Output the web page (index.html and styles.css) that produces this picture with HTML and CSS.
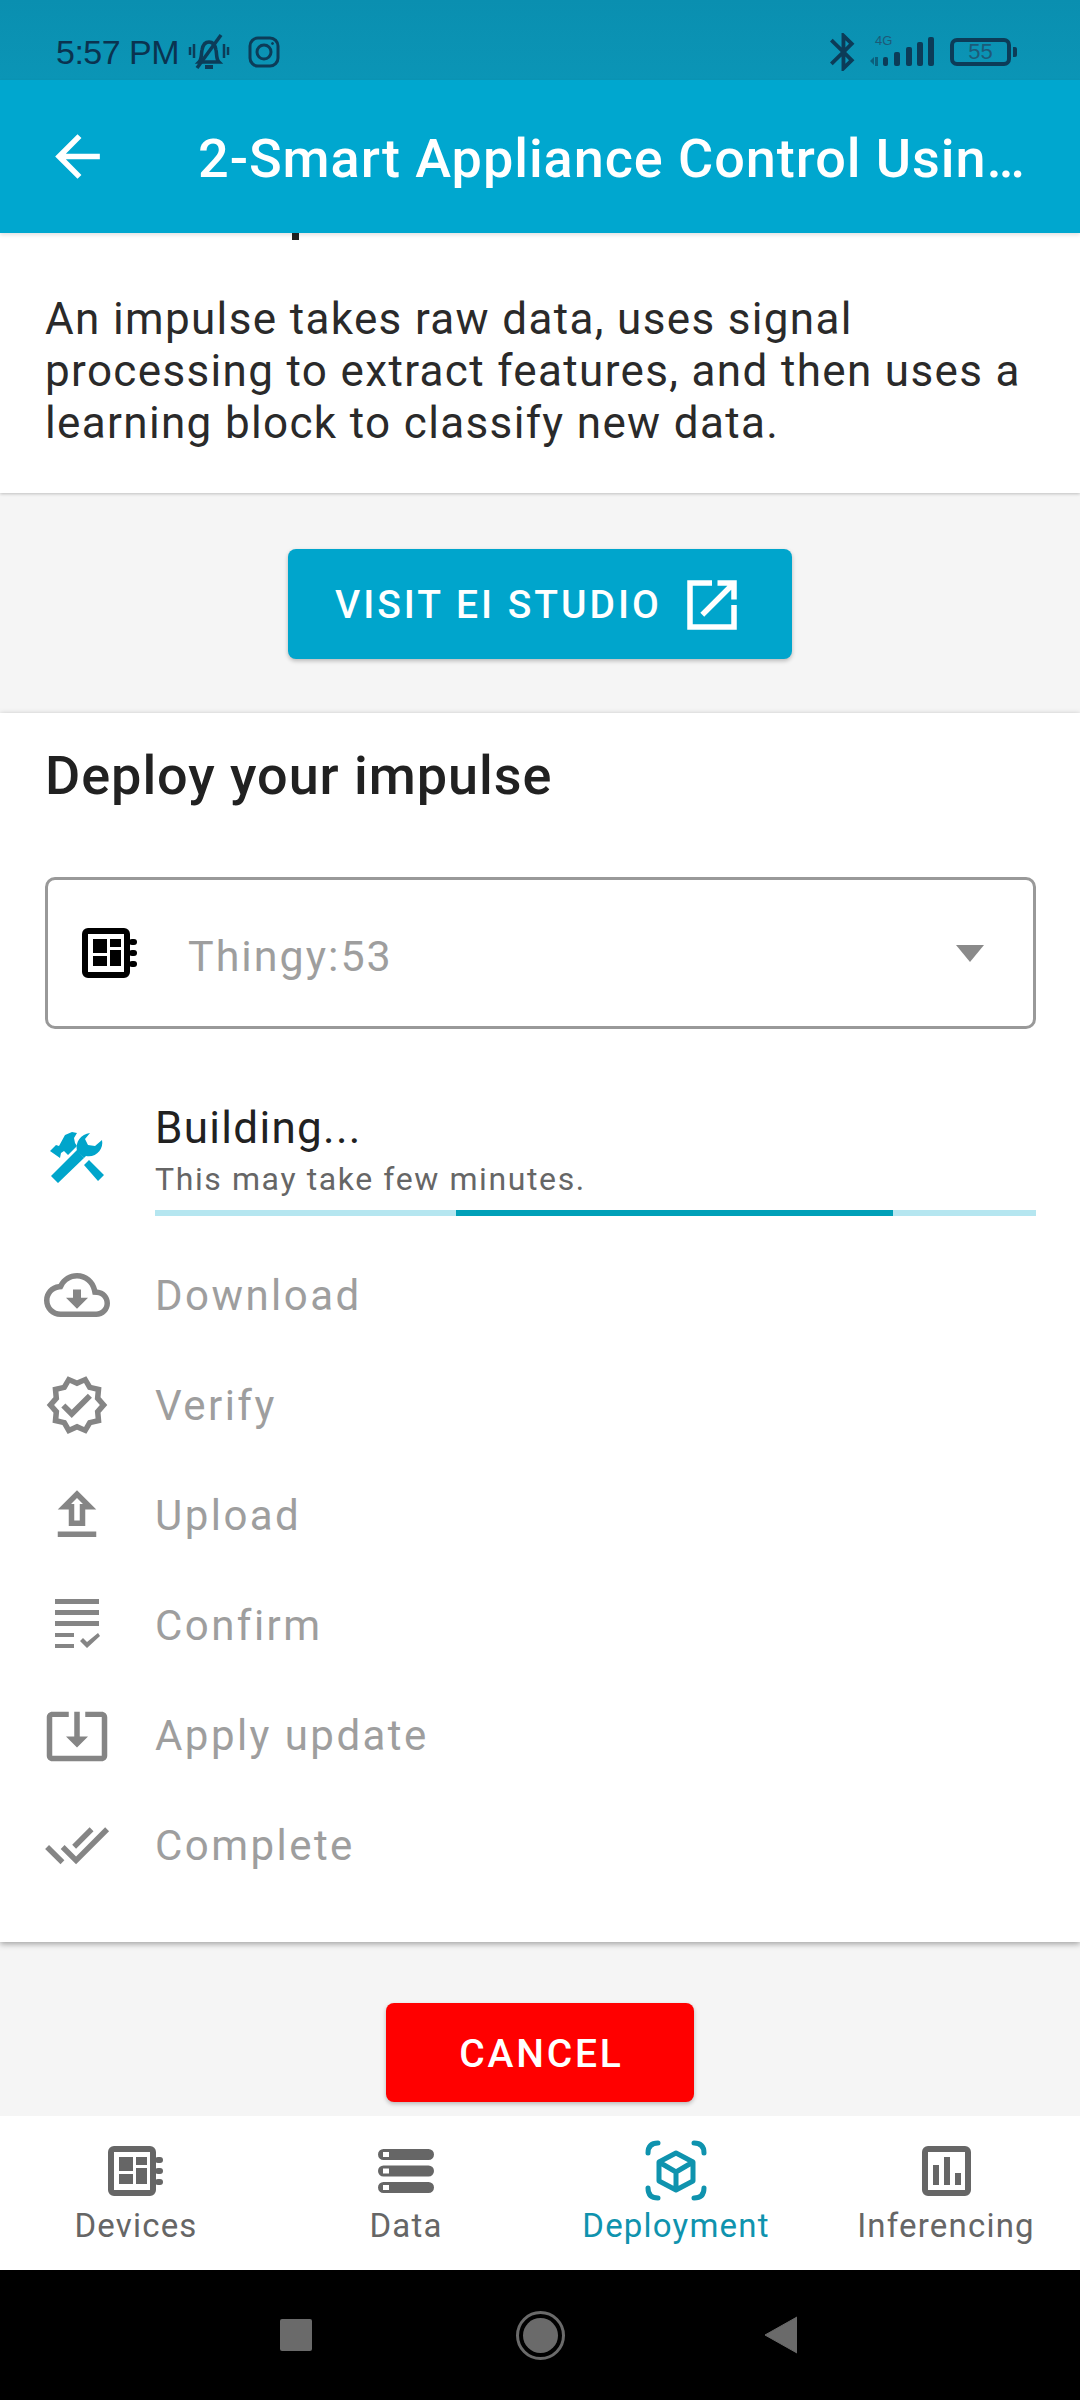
FILE: index.html
```html
<!DOCTYPE html>
<html lang="en">
<head>
  <meta charset="UTF-8" />
  <meta name="viewport" content="width=device-width, initial-scale=1.0"/>
  <title>Deployment</title>
  <link rel="stylesheet" href="styles.css">
</head>
<body>
  <div class="status-bar">
    <span class="status-time">5:57 PM</span>
    <svg class="icon-bell" viewBox="0 0 44 40" fill="none" stroke="#0c3c58" stroke-width="3.5">
      <path d="M12 30c3-3 2-7 3-12 1-6 4-8 7-8s6 2 7 8c1 5 0 9 3 12z"/>
      <path d="M18 35h8" stroke-width="4"/>
      <path d="M34 3 10 36"/>
      <path d="M3 15v8M7 12v14M37 12v14M41 15v8" stroke-width="2.5"/>
    </svg>
    <svg class="icon-insta" viewBox="0 0 32 32" fill="none" stroke="#0c3c58" stroke-width="3">
      <rect x="2" y="2" width="28" height="28" rx="8"/>
      <circle cx="16" cy="16" r="7"/>
      <circle cx="24.5" cy="7.5" r="1" fill="#0c3c58" stroke-width="1"/>
    </svg>
    <div class="status-right">
      <svg class="icon-bt" viewBox="5 2 13 20" fill="#0c3c58" preserveAspectRatio="none">
        <path d="M17.71 7.71L12 2h-1v7.59L6.41 5 5 6.41 10.59 12 5 17.59 6.41 19 11 14.41V22h1l5.71-5.71-4.3-4.29 4.3-4.29zM13 5.83l1.88 1.88L13 9.59V5.83zm1.88 10.46L13 18.17v-3.76l1.88 1.88z"/>
      </svg>
      <div class="signal">
        <span class="signal-label">4G</span>
        <svg class="signal-bars" viewBox="0 0 65 30" fill="#0c3c58">
          <path d="M0 24l4-4v8zM5 20h3v9H5z" opacity=".6"/>
          <rect x="13" y="20" width="5" height="9" rx="2"/>
          <rect x="24" y="15" width="6" height="14" rx="2"/>
          <rect x="36" y="10" width="6" height="19" rx="2"/>
          <rect x="47" y="5" width="6" height="24" rx="2"/>
          <rect x="58" y="0" width="6" height="29" rx="2"/>
        </svg>
      </div>
      <div class="battery"><span>55</span></div>
      <div class="battery-nub"></div>
    </div>
  </div>

  <div class="app-bar">
    <svg class="icon-back" viewBox="0 0 24 24" fill="#fff">
      <path d="M20 11H7.83l5.59-5.59L12 4l-8 8 8 8 1.41-1.41L7.83 13H20v-2z"/>
    </svg>
    <span class="app-title">2-Smart Appliance Control Usin…</span>
  </div>

  <section class="intro card">
    <div class="cut-stem"></div>
    <p>An impulse takes raw data, uses signal processing to extract features, and then uses a learning block to classify new data.</p>
  </section>

  <div class="action-band visit-band">
    <button class="btn btn-visit">
      <span>VISIT EI STUDIO</span>
      <svg class="icon-open" viewBox="0 0 24 24" fill="#fff">
        <path d="M19 19H5V5h7V3H3v18h18v-9h-2v7zM14 3v2h3.59l-9.83 9.83 1.41 1.41L19 6.41V10h2V3h-7z"/>
      </svg>
    </button>
  </div>

  <section class="deploy card">
    <h2>Deploy your impulse</h2>

    <div class="select-box">
      <svg class="icon-chip" viewBox="0 0 56 50">
        <rect x="3" y="3" width="42" height="44" rx="3" fill="none" stroke="#000" stroke-width="6"/>
        <path d="M11 11h14v14H11zM28 11h11v8H28zM11 28h14v10H11zM28 22h11v16H28z"/>
        <rect x="47" y="11" width="8" height="6" rx="3"/><rect x="47" y="22" width="8" height="6" rx="3"/><rect x="47" y="33" width="8" height="6" rx="3"/>
      </svg>
      <span class="select-value">Thingy:53</span>
      <div class="caret"></div>
    </div>

    <div class="build-row">
      <svg class="icon-tools" viewBox="0 0 54 52" fill="#00a5cb">
        <path d="M1 45 27 19l7 8L8 52zM34 34l5-5 15 15-6 6z"/>
        <path d="M27 20C25 11 31 3 40 2l-5 6 3 6 7 1 7-6c2 9-6 18-16 16l-2 2z"/>
        <path d="M0 20l6-6 3 1 6-11 7-3 5 1-3 5 1 5 2 3-9 9-4-4-3 2-1 5z"/>
      </svg>
      <div class="build-text">
        <div class="build-title">Building...</div>
        <div class="build-sub">This may take few minutes.</div>
        <div class="progress"><div class="progress-fill"></div></div>
      </div>
    </div>

    <ul class="steps">
      <li>
        <svg viewBox="0 0 24 24"><path d="M19.35 10.04C18.67 6.59 15.64 4 12 4 9.11 4 6.6 5.64 5.35 8.04 2.34 8.36 0 10.91 0 14c0 3.31 2.69 6 6 6h13c2.76 0 5-2.24 5-5 0-2.64-2.05-4.78-4.65-4.96zM19 18H6c-2.21 0-4-1.79-4-4 0-2.05 1.53-3.76 3.56-3.97l1.07-.11.5-.95C8.08 7.14 9.94 6 12 6c2.62 0 4.88 1.86 5.39 4.43l.3 1.5 1.53.11c1.56.1 2.78 1.41 2.78 2.96 0 1.65-1.35 3-3 3zm-5.55-8h-2.9v3H8l4 4 4-4h-2.55z"/></svg>
        <span>Download</span>
      </li>
      <li>
        <svg viewBox="0 0 24 24"><path d="M23 11.99l-2.44-2.79.34-3.69-3.61-.82L15.4 1.5 12 2.96 8.6 1.5 6.71 4.69 3.1 5.5l.34 3.7L1 11.99l2.44 2.79-.34 3.7 3.61.82L8.6 22.5l3.4-1.47 3.4 1.46 1.89-3.19 3.61-.82-.34-3.69L23 11.99zm-3.95 1.48l-.56.65.08.85.18 1.95-1.9.43-.84.19-.44.74-.99 1.68-1.78-.77-.79-.33-.79.34-1.78.77-.99-1.67-.44-.74-.84-.19-1.9-.43.18-1.96.08-.85-.56-.65L3.67 12l1.29-1.48.56-.65-.09-.85-.18-1.94 1.9-.43.84-.19.44-.74.99-1.68 1.78.77.79.33.79-.34 1.78-.77.99 1.68.44.74.84.19 1.9.43-.18 1.95-.08.85.56.65 1.29 1.47-1.28 1.48z"/><path d="M10.09 13.75l-2.32-2.33-1.48 1.49 3.8 3.81 7.34-7.36-1.48-1.49z"/></svg>
        <span>Verify</span>
      </li>
      <li>
        <svg viewBox="0 0 24 24"><path d="M9 16h6v-6h4l-7-7-7 7h4v6zm3-10.170L14.170 8H13v6h-2V8H9.830L12 5.830zM5 18h14v2H5z"/></svg>
        <span>Upload</span>
      </li>
      <li>
        <svg viewBox="0 0 66 66"><path d="M11 7h44v5H11zM11 18h44v5H11zM11 29h44v5H11zM11 41h19v4H11zM11 52h19v4H11z"/><path d="M36 49l3-3 4 4 11-9 2 3-13 12z"/></svg>
        <span>Confirm</span>
      </li>
      <li>
        <svg viewBox="0 0 24 24"><path d="M12 16.500l4-4h-3v-9h-2v9H8l4 4zm9-13h-6v1.990h6v14.030H3V5.490h6V3.500H3c-1.100 0-2 .9-2 2v14c0 1.100.9 2 2 2h18c1.100 0 2-.9 2-2v-14c0-1.100-.9-2-2-2z"/></svg>
        <span>Apply update</span>
      </li>
      <li>
        <svg viewBox="0 0 24 24"><path d="M18 7l-1.410-1.410-6.340 6.340 1.410 1.410L18 7zm4.240-1.410L11.660 16.170 7.480 12l-1.410 1.410L11.660 19l12-12-1.420-1.410zM.41 13.410L6 19l1.410-1.410L1.830 12 .41 13.410z"/></svg>
        <span>Complete</span>
      </li>
    </ul>
  </section>

  <div class="action-band cancel-band">
    <button class="btn btn-cancel">CANCEL</button>
  </div>

  <nav class="tabs">
    <div class="tab">
      <svg class="tab-icon icon-devices" viewBox="0 0 56 50" fill="#666">
        <rect x="3" y="3" width="42" height="44" rx="3" fill="none" stroke="#666" stroke-width="6"/>
        <path d="M11 11h14v14H11zM28 11h11v8H28zM11 28h14v10H11zM28 22h11v16H28z"/>
        <rect x="47" y="11" width="8" height="6" rx="3"/><rect x="47" y="22" width="8" height="6" rx="3"/><rect x="47" y="33" width="8" height="6" rx="3"/>
      </svg>
      <span>Devices</span>
    </div>
    <div class="tab">
      <svg class="tab-icon icon-data" viewBox="0 0 56 44" fill="#666">
        <path fill-rule="evenodd" d="M5.500 0h45a5.500 5.500 0 0 1 0 11h-45a5.500 5.500 0 0 1 0-11zM5 3v5h6V3zM5.500 16.500h45a5.500 5.500 0 0 1 0 11h-45a5.500 5.500 0 0 1 0-11zM5 19.500v5h6v-5zM5.500 33h45a5.500 5.500 0 0 1 0 11h-45a5.500 5.500 0 0 1 0-11zM5 36v5h6v-5z"/>
      </svg>
      <span>Data</span>
    </div>
    <div class="tab tab-active">
      <svg class="tab-icon icon-deploy" viewBox="0 0 62 61" fill="none" stroke="#0f93ae" stroke-width="5">
        <path d="M31 13 48 22V41L31 50 14 41V22zM14 22l17 10 17-10M31 32v18" stroke-linejoin="round"/>
        <path d="M3 13Q3 3 13 3M49 3Q59 3 59 13M59 48Q59 58 49 58M13 58Q3 58 3 48" stroke-linecap="round"/>
      </svg>
      <span>Deployment</span>
    </div>
    <div class="tab">
      <svg class="tab-icon icon-inference" viewBox="0 0 49 50" fill="#666">
        <rect x="3" y="3" width="43" height="44" rx="3" fill="none" stroke="#666" stroke-width="6"/>
        <path d="M11 19h6v20h-6zM22 11h6v28h-6zM33 27h6v12h-6z"/>
      </svg>
      <span>Inferencing</span>
    </div>
  </nav>

  <div class="system-nav">
    <div class="sys-square"></div>
    <div class="sys-circle"><div></div></div>
    <svg class="sys-back" viewBox="0 0 33 38" fill="#6a6a6a"><path d="M33 1v36L1 19z" stroke="#6a6a6a" stroke-width="1" stroke-linejoin="round"/></svg>
  </div>
</body>
</html>
```

FILE: styles.css
```css
* {
  box-sizing: border-box;
}

body {
  margin: 0;
  height: 2400px;
  width: 1080px;
  overflow: hidden;
  display: flex;
  flex-direction: column;
  background-color: #f5f5f5;
  font-family: Roboto, "Noto Sans", sans-serif;
  color: #212121;
}

/* status bar */
.status-bar {
  height: 80px;
  flex: none;
  display: flex;
  align-items: center;
  padding: 24px 63px 0 56px;
  background: linear-gradient(#0a8fb0, #0b95b6);
  color: #0a3350;
}

.status-time {
  font-family: "Liberation Sans", sans-serif;
  font-size: 34px;
  letter-spacing: -0.5px;
}

.icon-bell {
  width: 44px;
  height: 40px;
  margin-left: 8px;
}

.icon-insta {
  width: 32px;
  height: 32px;
  margin-left: 17px;
}

.status-right {
  margin-left: auto;
  display: flex;
  align-items: center;
}

.icon-bt {
  width: 25px;
  height: 38px;
}

.signal {
  position: relative;
  width: 65px;
  height: 30px;
  margin-left: 15px;
}

.signal-label {
  position: absolute;
  left: 5px;
  top: -4px;
  font-family: "Liberation Sans", sans-serif;
  font-size: 13px;
  color: #1d5a78;
}

.signal-bars {
  display: block;
  width: 65px;
  height: 30px;
}

.battery {
  width: 61px;
  height: 28px;
  margin-left: 15px;
  border: 4px solid #0c3c58;
  border-radius: 7px;
  display: flex;
  align-items: center;
  justify-content: center;
  font-family: "Liberation Sans", sans-serif;
  font-size: 22px;
  color: #1d5a78;
}

.battery-nub {
  width: 4px;
  height: 10px;
  margin-left: 2px;
  background-color: #0c3c58;
  border-radius: 0 2px 2px 0;
}

/* app bar */
.app-bar {
  height: 153px;
  flex: none;
  display: flex;
  align-items: center;
  background-color: #00a7cf;
  padding-left: 44px;
  position: relative;
  box-shadow: 0 2px 4px rgba(0, 0, 0, 0.12);
  z-index: 2;
}

.icon-back {
  width: 67px;
  height: 67px;
}

.app-title {
  margin-left: 87px;
  margin-top: 3px;
  color: #fff;
  font-size: 54px;
  font-weight: 500;
  white-space: nowrap;
  letter-spacing: 0.95px;
}

/* cards */
.card {
  background-color: #fff;
  flex: none;
  box-shadow: 0 1px 3px rgba(0, 0, 0, 0.22);
}

.intro {
  height: 260px;
}

.cut-stem {
  width: 7px;
  height: 7px;
  margin-left: 292px;
  background-color: #212121;
}

.intro p {
  margin: 53px 0 0;
  padding: 0 45px;
  font-size: 44px;
  line-height: 52px;
  letter-spacing: 1.35px;
  color: #2a2a2a;
}

.action-band {
  flex: none;
  display: flex;
  justify-content: center;
  align-items: flex-start;
}

.visit-band {
  height: 220px;
  padding-top: 56px;
}

.cancel-band {
  height: 174px;
  padding-top: 61px;
}

.btn {
  border: 0;
  border-radius: 8px;
  color: #fff;
  font-family: inherit;
  font-size: 39px;
  font-weight: 500;
  letter-spacing: 3px;
  display: flex;
  align-items: center;
  justify-content: center;
  box-shadow: 0 2px 4px rgba(0, 0, 0, 0.25);
}

.btn-visit {
  width: 504px;
  height: 110px;
  background-color: #00a5cc;
  gap: 17px;
  padding-top: 2px;
}

.icon-open {
  width: 66px;
  height: 66px;
}

.btn-cancel {
  width: 308px;
  height: 99px;
  padding: 3px 0 0 3px;
  letter-spacing: 2.8px;
  background-color: #ff0000;
}

/* deploy section */
.deploy {
  height: 1229px;
  padding: 33px 44px 0 45px;
  box-shadow: 0 2px 6px rgba(0, 0, 0, 0.35);
  position: relative;
}

.deploy h2 {
  margin: 0;
  height: 60px;
  line-height: 60px;
  font-size: 54px;
  font-weight: 500;
  letter-spacing: 0.95px;
}

.select-box {
  margin-top: 71px;
  height: 152px;
  display: flex;
  align-items: center;
  padding: 0 46px 0 34px;
  border: 3px solid #999;
  border-radius: 10px;
}

.icon-chip {
  width: 56px;
  height: 50px;
  flex: none;
}

.select-value {
  margin-left: 50px;
  margin-top: 5px;
  font-size: 43px;
  letter-spacing: 2px;
  color: #9e9e9e;
}

.caret {
  margin-left: auto;
  margin-right: 3px;
  width: 0;
  height: 0;
  border-left: 14px solid transparent;
  border-right: 14px solid transparent;
  border-top: 17px solid #8a8a8a;
}

.build-row {
  margin-top: 47px;
  margin-left: -45px;
  display: flex;
  align-items: center;
  height: 168px;
}

.icon-tools {
  width: 54px;
  height: 52px;
  margin-left: 50px;
  margin-top: -6px;
  flex: none;
}

.build-text {
  margin-left: 51px;
  margin-top: -2px;
  flex: 1;
}

.build-title {
  font-size: 44px;
  line-height: 52px;
  letter-spacing: 1.3px;
}

.build-sub {
  font-size: 32px;
  line-height: 40px;
  margin-top: 5px;
  letter-spacing: 1.6px;
  color: #666;
}

.progress {
  height: 6px;
  margin-top: 11px;
  background-color: #b5e6f0;
}

.progress-fill {
  width: 437px;
  height: 6px;
  margin-left: 301px;
  background-color: #00a0b8;
}

.steps {
  list-style: none;
  margin: -4px 0 0 -45px;
  padding: 0;
}

.steps li {
  height: 110px;
  display: flex;
  align-items: center;
  padding-left: 44px;
  font-size: 42px;
  letter-spacing: 2.45px;
  color: #9e9e9e;
}

.steps svg {
  width: 66px;
  height: 66px;
  flex: none;
  fill: #858585;
  margin-right: 45px;
}

/* bottom tabs */
.tabs {
  height: 154px;
  flex: none;
  display: grid;
  grid-template-columns: repeat(4, 270px);
  background-color: #fff;
}

.tab {
  display: flex;
  flex-direction: column;
  align-items: center;
  padding: 30px 0 0 2px;
  font-size: 33px;
  line-height: 36px;
  letter-spacing: 1.2px;
  color: #666;
}

.tab-icon {
  margin-bottom: 12px;
}

.icon-devices {
  width: 56px;
  height: 50px;
}

.icon-data {
  width: 56px;
  height: 44px;
  margin-top: 3px;
  margin-bottom: 15px;
}

.icon-deploy {
  width: 62px;
  height: 61px;
  margin-top: -6px;
  margin-bottom: 7px;
}

.icon-inference {
  width: 49px;
  height: 50px;
}

.tab-active {
  color: #0f93ae;
}

/* android nav */
.system-nav {
  flex: 1;
  background-color: #000;
  display: flex;
  align-items: center;
  padding: 0 0 0 280px;
}

.sys-square {
  width: 32px;
  height: 32px;
  border-radius: 2px;
  background-color: #6a6a6a;
}

.sys-circle {
  width: 49px;
  height: 49px;
  margin-left: 204px;
  border: 3px solid #6a6a6a;
  border-radius: 50%;
  padding: 4px;
}

.sys-circle div {
  width: 100%;
  height: 100%;
  border-radius: 50%;
  background-color: #6a6a6a;
}

.sys-back {
  width: 33px;
  height: 38px;
  margin-left: 199px;
}
```
